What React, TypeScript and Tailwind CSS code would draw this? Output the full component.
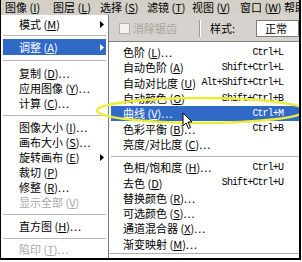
import React from 'react';

type LeftRow =
  | { kind: 'item'; label: string; accel: string; dots?: boolean; arrow?: boolean; active?: boolean; disabled?: boolean; h: string }
  | { kind: 'sep'; h: string };

const leftRows: LeftRow[] = [
  { kind: 'item', label: '模式', accel: 'M', arrow: true, h: 'h-[15px]' },
  { kind: 'sep', h: 'h-[7px]' },
  { kind: 'item', label: '调整', accel: 'A', arrow: true, active: true, h: 'h-[16px]' },
  { kind: 'sep', h: 'h-[11px]' },
  { kind: 'item', label: '复制', accel: 'D', dots: true, h: 'h-[15px]' },
  { kind: 'item', label: '应用图像', accel: 'Y', dots: true, h: 'h-[15px]' },
  { kind: 'item', label: '计算', accel: 'C', dots: true, h: 'h-[15px]' },
  { kind: 'sep', h: 'h-[9px]' },
  { kind: 'item', label: '图像大小', accel: 'I', dots: true, h: 'h-[15px]' },
  { kind: 'item', label: '画布大小', accel: 'S', dots: true, h: 'h-[15px]' },
  { kind: 'item', label: '旋转画布', accel: 'E', arrow: true, h: 'h-[15px]' },
  { kind: 'item', label: '裁切', accel: 'P', h: 'h-[15px]' },
  { kind: 'item', label: '修整', accel: 'R', dots: true, h: 'h-[15px]' },
  { kind: 'item', label: '显示全部', accel: 'V', disabled: true, h: 'h-[15px]' },
  { kind: 'sep', h: 'h-[9px]' },
  { kind: 'item', label: '直方图', accel: 'H', dots: true, h: 'h-[15px]' },
  { kind: 'sep', h: 'h-[8px]' },
  { kind: 'item', label: '陷印', accel: 'T', dots: true, disabled: true, h: 'h-[15px]' },
];

type SubRow =
  | { kind: 'item'; label: string; accel: string; dots?: boolean; keys?: string; active?: boolean }
  | { kind: 'sep' };

const subRows: SubRow[] = [
  { kind: 'item', label: '色阶', accel: 'L', dots: true, keys: 'Ctrl+L' },
  { kind: 'item', label: '自动色阶', accel: 'A', keys: 'Shift+Ctrl+L' },
  { kind: 'item', label: '自动对比度', accel: 'U', keys: 'Alt+Shift+Ctrl+L' },
  { kind: 'item', label: '自动颜色', accel: 'O', keys: 'Shift+Ctrl+B' },
  { kind: 'item', label: '曲线', accel: 'V', dots: true, keys: 'Ctrl+M', active: true },
  { kind: 'item', label: '色彩平衡', accel: 'B', dots: true, keys: 'Ctrl+B' },
  { kind: 'item', label: '亮度/对比度', accel: 'C', dots: true },
  { kind: 'sep' },
  { kind: 'item', label: '色相/饱和度', accel: 'H', dots: true, keys: 'Ctrl+U' },
  { kind: 'item', label: '去色', accel: 'D', keys: 'Shift+Ctrl+U' },
  { kind: 'item', label: '替换颜色', accel: 'R', dots: true },
  { kind: 'item', label: '可选颜色', accel: 'S', dots: true },
  { kind: 'item', label: '通道混合器', accel: 'X', dots: true },
  { kind: 'item', label: '渐变映射', accel: 'M', dots: true },
];

const menuBar = [
  { label: '图像', accel: 'I', w: 'w-[48px]' },
  { label: '图层', accel: 'L', w: 'w-[47px]' },
  { label: '选择', accel: 'S', w: 'w-[47px]' },
  { label: '滤镜', accel: 'T', w: 'w-[45px]' },
  { label: '视图', accel: 'V', w: 'w-[48px]' },
  { label: '窗口', accel: 'W', w: 'w-[44px]' },
];

function Label({ label, accel, dots }: { label: string; accel: string; dots?: boolean }) {
  return (
    <span className="whitespace-nowrap">
      {label} (<span className="underline underline-offset-1">{accel}</span>)
      {dots && <span className="tracking-[1px]">...</span>}
    </span>
  );
}

function Arrow({ white }: { white?: boolean }) {
  return (
    <svg width="4" height="7" viewBox="0 0 4 7" className="absolute left-[97px]">
      <path d="M0 0 L4 3.5 L0 7 Z" fill={white ? '#ffffff' : '#000000'} />
    </svg>
  );
}

export default function App() {
  return (
    <div
      className="w-[302px] h-[262px] bg-white text-[11px] leading-none text-black"
      style={{ fontFamily: '"Noto Sans CJK SC", "Noto Sans", sans-serif' }}
    >
      <div className="relative w-[301px] h-[260px] border-l border-r-2 border-b-2 border-black flex flex-col overflow-hidden">
        {/* menu bar */}
        <div className="h-[15px] bg-[#d4d0c8] flex items-center pl-[4px] shrink-0 overflow-hidden">
          {menuBar.map((m) => (
            <div key={m.label} className={`${m.w} shrink-0`}>
              <Label label={m.label} accel={m.accel} />
            </div>
          ))}
          <div className="shrink-0 whitespace-nowrap">帮助</div>
        </div>

        <div className="flex flex-1 min-h-0">
          {/* image menu */}
          <div className="w-[108px] shrink-0 bg-white border-r border-[#7a7a7a] pt-[2px] flex flex-col">
            {leftRows.map((r, i) =>
              r.kind === 'sep' ? (
                <div key={i} className={`${r.h} flex items-center px-[2px]`}>
                  <div className="w-full border-t border-[#b8b8b8]" />
                </div>
              ) : (
                <div
                  key={i}
                  className={`${r.h} relative flex items-center pl-[16px] mx-[2px] ${
                    r.active ? 'bg-[#3169c6] text-white' : r.disabled ? 'text-[#a8a8a8]' : ''
                  }`}
                >
                  <Label label={r.label} accel={r.accel} dots={r.dots} />
                  {r.arrow && <Arrow white={r.active} />}
                </div>
              )
            )}
          </div>

          <div className="flex-1 flex flex-col min-w-0">
            {/* options bar */}
            <div className="h-[26px] shrink-0 bg-[#d6d3ce] flex items-center pl-[10px]">
              <div className="w-[11px] h-[11px] border border-[#b5b2ab] bg-[#f4f3ef]" />
              <span className="ml-[3px] text-[#a9a69f]">消除锯齿</span>
              <div className="ml-[22px] w-[2px] h-[17px] border-l border-[#9d9a93] border-r border-r-white" />
              <span className="ml-[9px]">样式:</span>
              <div className="ml-[21px] flex-1 h-[17px] bg-white border border-[#7f7c75] flex items-center pl-[8px]">
                正常
              </div>
            </div>

            {/* adjustments submenu */}
            <div className="bg-white border-t border-[#808080] border-b border-b-[#b0b0b0] pt-[3px] pb-[1px] flex flex-col">
              {subRows.map((r, i) =>
                r.kind === 'sep' ? (
                  <div key={i} className="h-[8px] flex items-center pl-[2px]">
                    <div className="w-full border-t border-[#b8b8b8]" />
                  </div>
                ) : (
                  <div
                    key={i}
                    className={`h-[15.3px] flex items-center justify-between ml-[2px] pl-[12px] pr-[16px] ${
                      r.active ? 'bg-[#3169c6] text-white' : ''
                    }`}
                  >
                    <Label label={r.label} accel={r.accel} dots={r.dots} />
                    {r.keys && (
                      <span
                        className="text-[10px] tracking-[-0.9px]"
                        style={{ fontFamily: '"Liberation Mono", monospace' }}
                      >
                        {r.keys}
                      </span>
                    )}
                  </div>
                )
              )}
            </div>
            <div className="flex-1 bg-white" />
          </div>
        </div>

        {/* highlight ellipse and pointer drawn on top */}
        <svg className="absolute left-[-1px] top-0 pointer-events-none" width="302" height="262" viewBox="0 0 302 262">
          <ellipse cx="201" cy="110.5" rx="104" ry="12.5" fill="none" stroke="#ecec3a" strokeWidth="2.5" />
          <path
            d="M183 113 L183 126 L186 123 L188.5 128.5 L190.5 127.5 L188 122 L192 122 Z"
            fill="#ffffff"
            stroke="#000000"
            strokeWidth="1"
            strokeLinejoin="miter"
          />
        </svg>
      </div>
    </div>
  );
}
